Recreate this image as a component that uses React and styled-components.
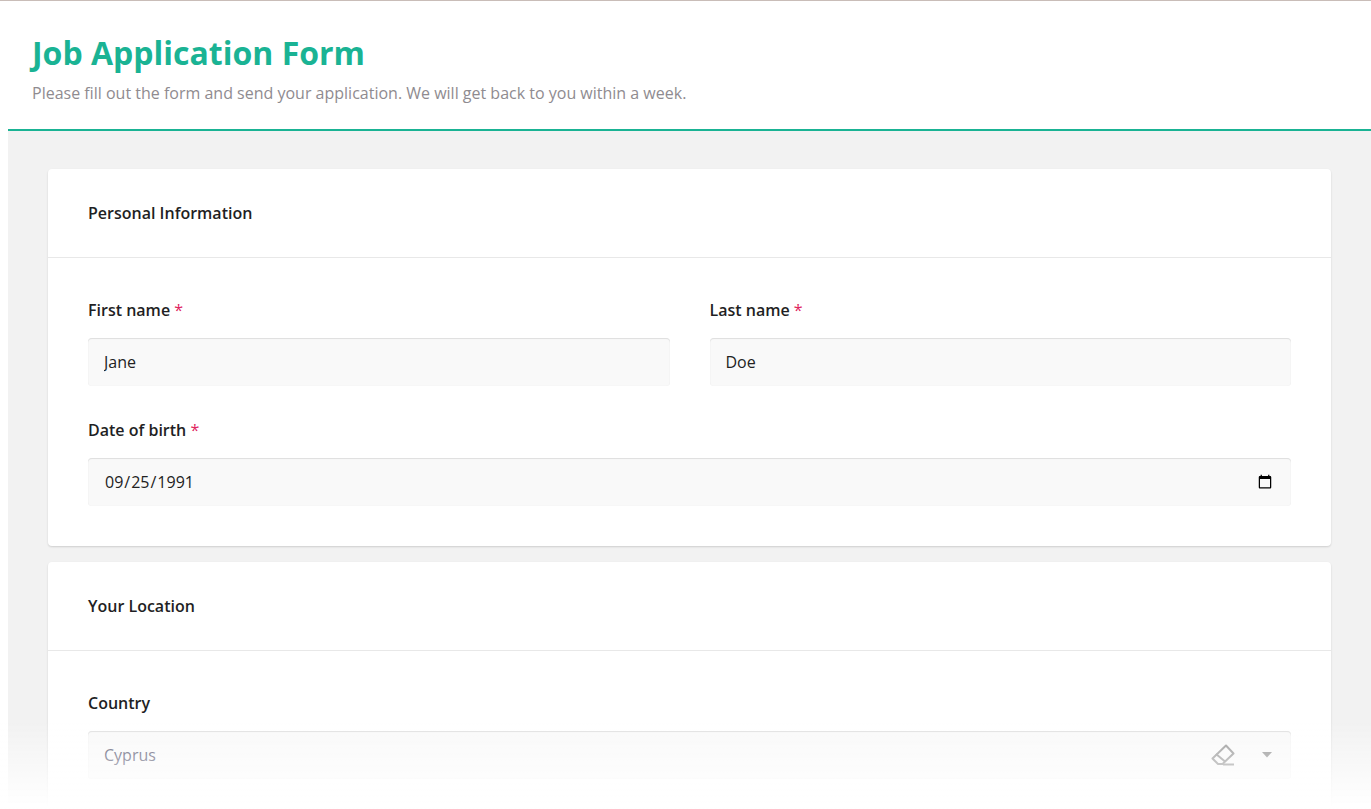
import React from "react";
import styled, { createGlobalStyle } from "styled-components";

const Global = createGlobalStyle`
  html, body {
    margin: 0;
    background: #fff;
    font-family: "Open Sans", "Liberation Sans", sans-serif;
  }
`;

const Page = styled.div`
  height: 100vh;
  box-sizing: border-box;
  overflow: hidden;
  border-top: 1px solid #c9bdb8;
  padding-left: 8px;
`;

const Header = styled.header`
  height: 130px;
  box-sizing: border-box;
  padding: 32px 24px 0;
  background: #fff;
  border-bottom: 2px solid #1ab394;
`;

const Title = styled.h1`
  margin: 0 0 8px;
  font-size: 32px;
  line-height: 40px;
  font-weight: 700;
  color: #1ab394;
`;

const Subtitle = styled.p`
  margin: 0;
  font-size: 16px;
  line-height: 24px;
  color: #8f8b90;
`;

const Main = styled.main`
  background: #f2f2f2;
  padding: 38px 40px 40px;
  display: flex;
  flex-direction: column;
  gap: 16px;
`;

const Card = styled.section`
  background: #fff;
  border-radius: 4px;
  box-shadow: 0 1px 2px rgba(0, 0, 0, 0.15);
`;

const CardHead = styled.h2`
  margin: 0;
  height: 89px;
  box-sizing: border-box;
  padding: 0 40px;
  display: flex;
  align-items: center;
  font-size: 16px;
  font-weight: 600;
  color: #1f1f24;
  border-bottom: 1px solid #e8e8e8;
`;

const CardBody = styled.div`
  padding: 40px;
  display: flex;
  flex-direction: column;
  gap: 32px;
`;

const Row = styled.div`
  display: grid;
  grid-template-columns: 1fr 1fr;
  gap: 40px;
`;

const Field = styled.label`
  display: flex;
  flex-direction: column;
  gap: 16px;
`;

const Label = styled.span`
  font-size: 16px;
  line-height: 24px;
  font-weight: 600;
  color: #1f1f24;
`;

const Star = styled.span`
  color: #e0245e;
  font-weight: 400;
`;

const Input = styled.input`
  width: 100%;
  height: 48px;
  box-sizing: border-box;
  padding: 0 16px;
  border: 0;
  border-radius: 4px;
  outline: 0;
  background: #f9f9f9;
  box-shadow: inset 0 1px 1px rgba(0, 0, 0, 0.1), inset 0 0 1px rgba(0, 0, 0, 0.08);
  font-family: inherit;
  font-size: 16px;
  color: ${(p) => (p.$muted ? "#50506a" : "#222")};
`;

const SelectBox = styled.div`
  position: relative;
`;

const SelectIcons = styled.div`
  position: absolute;
  top: 13px;
  right: 19px;
  display: flex;
  align-items: center;
  gap: 27px;
`;

const Fade = styled.div`
  position: fixed;
  left: 0;
  right: 0;
  bottom: 0;
  height: 90px;
  background: linear-gradient(to bottom, rgba(255, 255, 255, 0), #fff);
  pointer-events: none;
`;

const Eraser = () => (
  <svg width="24" height="22" viewBox="0 0 24 22" fill="none" stroke="#8f8f8f" strokeWidth="2">
    <path d="M15 1.5 22.5 9.5 11.5 20H7L1.5 14.5Z" strokeLinejoin="round" />
    <path d="M5 10l9 7.5" />
    <path d="M12 20.5h11" />
  </svg>
);

const Caret = () => (
  <svg width="10" height="6" viewBox="0 0 10 6">
    <path d="M0 0h10L5 5.5Z" fill="#8a8a8a" />
  </svg>
);

const Req = () => <Star>*</Star>;

export default function App() {
  return (
    <>
      <Global />
      <Page>
        <Header>
          <Title>Job Application Form</Title>
          <Subtitle>Please fill out the form and send your application. We will get back to you within a week.</Subtitle>
        </Header>
        <Main>
          <Card>
            <CardHead>Personal Information</CardHead>
            <CardBody>
              <Row>
                <Field>
                  <Label>First name <Req /></Label>
                  <Input defaultValue="Jane" />
                </Field>
                <Field>
                  <Label>Last name <Req /></Label>
                  <Input defaultValue="Doe" />
                </Field>
              </Row>
              <Field>
                <Label>Date of birth <Req /></Label>
                <Input type="date" defaultValue="1991-09-25" />
              </Field>
            </CardBody>
          </Card>
          <Card>
            <CardHead>Your Location</CardHead>
            <CardBody>
              <Field>
                <Label>Country</Label>
                <SelectBox>
                  <Input $muted readOnly defaultValue="Cyprus" />
                  <SelectIcons>
                    <Eraser />
                    <Caret />
                  </SelectIcons>
                </SelectBox>
              </Field>
            </CardBody>
          </Card>
        </Main>
        <Fade />
      </Page>
    </>
  );
}
